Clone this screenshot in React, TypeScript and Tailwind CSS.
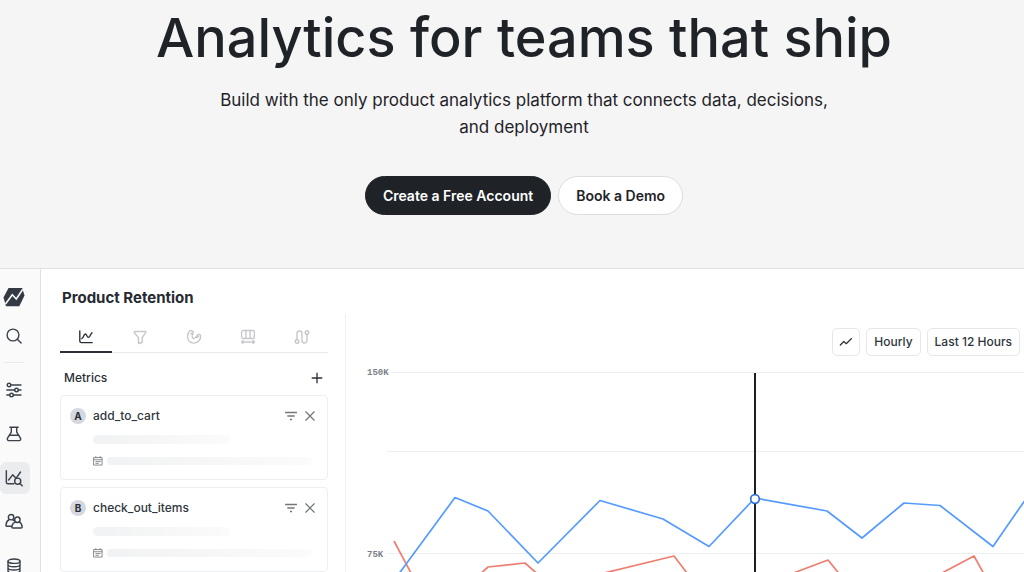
import type { ReactNode } from 'react';
import { clsx } from 'clsx';

type Point = [number, number];

const SIGNUPS: Point[] = [
  [41, 234],
  [109, 141.5],
  [142, 155],
  [192, 207],
  [254, 144.5],
  [317, 163],
  [363, 190.5],
  [409, 142],
  [481, 155],
  [516, 182],
  [558, 147],
  [594, 149.5],
  [647, 190.5],
  [684, 137],
];

const CHECKOUTS: Point[] = [
  [48, 185],
  [65, 217],
  [78, 240],
  [120, 231],
  [142, 211],
  [179, 207],
  [212, 236],
  [258, 217],
  [328, 200],
  [354, 234],
  [400, 236],
  [450, 216],
  [482, 204],
  [508, 236],
  [560, 236],
  [596, 217],
  [628, 200],
  [648, 236],
];

const toPoints = (points: Point[]) => points.map((p) => p.join(',')).join(' ');

interface IconProps {
  size?: number;
  stroke?: number;
  children: ReactNode;
}

function Icon({ size = 16, stroke = 1.4, children }: IconProps) {
  return (
    <svg
      width={size}
      height={size}
      viewBox="0 0 16 16"
      fill="none"
      stroke="currentColor"
      strokeWidth={stroke}
      strokeLinecap="round"
      strokeLinejoin="round"
      aria-hidden="true"
      className="shrink-0"
    >
      {children}
    </svg>
  );
}

const NAV_ITEMS = [
  {
    label: 'Configs',
    icon: (
      <Icon>
        <circle cx="3" cy="3" r="1.8" />
        <circle cx="10.5" cy="8" r="1.8" />
        <circle cx="5.5" cy="13" r="1.8" />
        <path d="M4.8 3H15M.8 8h7.9M12.3 8H15M.8 13h2.9M7.3 13H15" />
      </Icon>
    ),
  },
  {
    label: 'Experiments',
    icon: (
      <Icon>
        <path d="M3.8 1.2h8.4M5.3 1.2v5L1.6 12a1.6 1.6 0 0 0 1.4 2.6h10a1.6 1.6 0 0 0 1.4-2.6l-3.7-5.8v-5M3.8 9.2h8.4" />
      </Icon>
    ),
  },
  {
    label: 'Analytics',
    active: true,
    icon: (
      <Icon size={18} stroke={1.3}>
        <path d="M1.2 1.5v10.3c0 .9.5 1.4 1.4 1.4h5.2M3.2 9.8l3.6-4.6 3 3.1 4-5.6" />
        <circle cx="11.3" cy="10.8" r="2.7" />
        <path d="m13.3 12.8 2 2" />
      </Icon>
    ),
  },
  {
    label: 'Users',
    icon: (
      <Icon size={18} stroke={1.3}>
        <circle cx="5.4" cy="3.7" r="2.4" />
        <circle cx="11" cy="6" r="2.4" />
        <path d="M3.8 5.8c-1.8.9-2.7 2.5-2.9 4.9-.1.7.3 1.1 1 1.1h3.3M9.4 7.9c-1.9.8-3 2.1-3.3 4.1-.2.9.2 1.4 1 1.4h7.1c.8 0 1.2-.5 1-1.4-.2-2.1-1-3.3-2.7-4.1M6.9 6l1.3.7" />
      </Icon>
    ),
  },
  {
    label: 'Warehouse',
    icon: (
      <Icon>
        <ellipse cx="8" cy="3.2" rx="6" ry="2.2" />
        <path d="M2 3.2v9.6C2 14 4.7 15 8 15s6-1 6-2.2V3.2M2 6.5c0 1.2 2.7 2.2 6 2.2s6-1 6-2.2M2 9.8C2 11 4.7 12 8 12s6-1 6-2.2" />
      </Icon>
    ),
  },
];

const TABS = [
  {
    label: 'Metric drilldown',
    icon: (
      <Icon>
        <path d="M1.8 2v10c0 1 .6 1.6 1.6 1.6h10.8M3.8 9.6C6 9 5.4 5 7.4 5c1.6 0 1.2 3.4 3 3.4 1.6 0 1.6-2.6 3.6-4.6" />
      </Icon>
    ),
  },
  {
    label: 'Funnels',
    icon: (
      <Icon>
        <path d="M3 2.5h10c.8 0 1.1.6.7 1.2L10.2 8.5v5L6.5 14.5v-6L2.3 3.7C1.9 3.1 2.2 2.5 3 2.5Z" />
      </Icon>
    ),
  },
  {
    label: 'Retention',
    icon: (
      <Icon>
        <path d="M3.4 2.3C.6 5.8.7 10.8 4.4 13.1c4 2.5 9.4.1 10.2-5M7.1 4.6C5.5 6.9 6 9.6 7.9 9.6c1.8 0 1.9-2 3.2-3.1M3.4 2.3c1.5-1.8 4.600-.2 3.700 2.300M11.100 6.500c1.600-2 4.200-.6 3.500 1.600M5 5.200l.8-1.300M10.800 8.600l1.800-1.200" />
      </Icon>
    ),
  },
  {
    label: 'Distribution',
    icon: (
      <Icon>
        <rect x="1.6" y="1.5" width="12.8" height="8" rx="1.5" />
        <path d="M5.9 1.5v8M10.1 1.5v8M1.5 13h13M3 11.5 1.5 13 3 14.5M13 11.5l1.5 1.5-1.5 1.5" />
      </Icon>
    ),
  },
  {
    label: 'Journeys',
    icon: (
      <Icon>
        <circle cx="3" cy="12.5" r="1.8" />
        <circle cx="13" cy="3.5" r="1.8" />
        <path d="M3 10.7V4.500a2.500 2.500 0 0 1 5 0v7a2.500 2.500 0 0 0 5 0V5.300" />
      </Icon>
    ),
  },
];

const METRICS = [
  { key: 'A', name: 'add_to_cart' },
  { key: 'B', name: 'check_out_items' },
];

function Hero() {
  return (
    <section className="flex flex-col items-center pl-6 text-center text-[#1f2328]">
      <h1 className="pt-1 text-[54px] leading-[68px] font-medium whitespace-nowrap">Analytics for teams that ship</h1>
      <p className="mt-[15px] max-w-[620px] text-[17px] leading-[27px]">
        Build with the only product analytics platform that connects data, decisions, and deployment
      </p>
      <div className="mt-[35px] flex gap-[7px] pb-[53px] text-[14px] leading-[21px] font-semibold">
        <button type="button" className="rounded-full border border-[#1f2328] bg-[#1f2328] px-[17px] py-2 text-white">
          Create a Free Account
        </button>
        <button type="button" className="rounded-full border border-[#dcdddf] bg-white px-[17px] py-2">
          Book a Demo
        </button>
      </div>
    </section>
  );
}

function Sidebar() {
  return (
    <nav className="flex w-[41px] shrink-0 flex-col border-r border-[#dfe1e4] bg-[#fafafa] pt-3 text-[#3b424b]">
      <a href="#" aria-label="Home" className="flex h-8 w-[30px] shrink-0 items-center justify-center pr-[3px]">
        <svg width="22" height="20" viewBox="0 0 22 20" aria-hidden="true">
          <path d="M5.5 1h13.7l2.300 7.500-5.200 10.700H3L.5 10.500Z" fill="#343a43" />
          <path d="m2.500 17 6.800-9.200 4 4.200 6.300-9.500" fill="none" stroke="#fafafa" strokeWidth="1.6" />
        </svg>
      </a>
      <button
        type="button"
        aria-label="Search"
        className="mt-[7px] flex h-8 w-[30px] shrink-0 items-center justify-center pr-[3px]"
      >
        <Icon>
          <circle cx="7" cy="7" r="5.9" />
          <path d="m11.3 11.3 3.8 3.8" />
        </Icon>
      </button>
      <div className="mt-[10px] mr-4 ml-1 border-t border-[#e8e9eb]" />
      <div className="mt-[11px] flex flex-col gap-3">
        {NAV_ITEMS.map((item) => (
          <button
            key={item.label}
            type="button"
            aria-label={item.label}
            className={clsx(
              'flex h-8 w-[30px] shrink-0 items-center justify-center rounded-md pr-[3px]',
              item.active && 'bg-[#ebecee]',
            )}
          >
            {item.icon}
          </button>
        ))}
      </div>
    </nav>
  );
}

function MetricCard({ label, name }: { label: string; name: string }) {
  return (
    <div className="rounded border border-[#eeeff1] px-[9px] pt-[10px] pb-[13px]">
      <div className="flex h-5 items-center">
        <span className="flex h-4 w-4 items-center justify-center rounded-full bg-[#d5d8de] text-[10px] font-bold text-[#2a2f36]">
          {label}
        </span>
        <span className="ml-[7px] text-[12px] font-medium text-[#30363d]">{name}</span>
        <div className="ml-auto flex items-center gap-[5px] pr-px text-[#73777c]">
          <button type="button" aria-label="Filter">
            <Icon size={14} stroke={1.5}>
              <path d="M1.2 4h13.6M3.8 8h8.4M6.8 12h2.4" strokeLinecap="butt" />
            </Icon>
          </button>
          <button type="button" aria-label="Remove">
            <Icon size={14} stroke={1.4}>
              <path d="m3.2 3.2 9.6 9.6m0-9.6-9.6 9.6" />
            </Icon>
          </button>
        </div>
      </div>
      <div className="mt-[9px] mr-[88px] ml-[23px] h-[9px] rounded-full bg-linear-to-r from-[#f1f2f3] to-[#fbfbfb]" />
      <div className="mt-3 mr-[6px] ml-[23px] flex h-[10px] items-center text-[#83878b]">
        <Icon size={10} stroke={1.5}>
          <path d="M1.5 2.5h13v12h-13ZM1.5 6h13M4.5.8v2M11.5.8v2M4.5 9h7M4.5 11.7h4" />
        </Icon>
        <div className="ml-1 h-2 flex-1 rounded-full bg-linear-to-r from-[#f1f2f3] to-[#fbfbfb]" />
      </div>
    </div>
  );
}

function MetricsPanel() {
  return (
    <aside className="w-[305px] shrink-0 border-r border-[#eeeff1] pr-[17px] pl-[19px]">
      <div role="tablist" className="grid grid-cols-5 gap-[2px] border-b border-[#e9eaec]">
        {TABS.map((tab, i) => (
          <button
            key={tab.label}
            type="button"
            role="tab"
            aria-label={tab.label}
            aria-selected={i === 0}
            className={clsx(
              '-mb-px flex h-[39px] items-center justify-center border-b-2 pt-2',
              i === 0 ? 'border-[#2b3038] text-[#2b3038]' : 'border-transparent text-[#c6c8cb]',
            )}
          >
            {tab.icon}
          </button>
        ))}
      </div>
      <div className="flex h-[42px] items-center justify-between pt-2 pr-1 pl-1 text-[#2b3038]">
        <h3 className="text-[12px] font-medium">Metrics</h3>
        <button type="button" aria-label="Add metric">
          <Icon size={14} stroke={1.5}>
            <path d="M8 2.5v11M2.5 8h11" />
          </Icon>
        </button>
      </div>
      <div className="flex flex-col gap-[7px]">
        {METRICS.map((metric) => (
          <MetricCard key={metric.key} label={metric.key} name={metric.name} />
        ))}
      </div>
    </aside>
  );
}

function Chart() {
  return (
    <svg viewBox="0 0 678 240" className="block w-full" role="img" aria-label="Product retention chart">
      <g stroke="#eeeff1">
        <path d="M41 16.5H678M41 95.5H678M41 197.5H678" />
      </g>
      <g fill="#7b818a" className="font-['Liberation_Mono'] text-[9px] font-bold">
        <text x="21" y="19">
          150K
        </text>
        <text x="21" y="201">
          75K
        </text>
      </g>
      <g fill="none" strokeWidth="1.7" strokeLinejoin="round">
        <polyline points={toPoints(CHECKOUTS)} stroke="#f07e6e" />
        <polyline points={toPoints(SIGNUPS)} stroke="#559bff" />
      </g>
      <path d="M409 17V240" stroke="#1f2022" strokeWidth="2" />
      <circle cx="409" cy="143" r="4.3" fill="#fff" stroke="#2f6fd6" strokeWidth="1.7" />
    </svg>
  );
}

function ChartPanel() {
  const control = 'flex h-7 items-center rounded-[5px] border border-[#e6e7e9] px-[7px]';

  return (
    <div className="min-w-0 flex-1">
      <div className="flex justify-end gap-[6px] pt-[14px] pr-1 text-[12px] font-medium text-[#30363d]">
        <button type="button" aria-label="Line chart" className={clsx(control, 'w-7 justify-center')}>
          <Icon size={14} stroke={1.5}>
            <path d="m1.5 11.5 4-4 2.8 2.4 6-5.800" />
          </Icon>
        </button>
        <button type="button" className={control}>
          Hourly
        </button>
        <button type="button" className={control}>
          Last 12 Hours
        </button>
      </div>
      <Chart />
    </div>
  );
}

export default function App() {
  return (
    <main className="flex h-screen flex-col overflow-hidden bg-[#f5f5f5] font-['Inter','Liberation_Sans',sans-serif]">
      <Hero />
      <section className="flex min-h-0 flex-1 overflow-hidden border-t border-[#dfe1e4] bg-white">
        <Sidebar />
        <div className="min-w-0 flex-1">
          <h2 className="flex h-[45px] items-center pt-[14px] pl-[21px] text-[15px] font-bold text-[#262b32]">
            Product Retention
          </h2>
          <div className="flex">
            <MetricsPanel />
            <ChartPanel />
          </div>
        </div>
      </section>
    </main>
  );
}
